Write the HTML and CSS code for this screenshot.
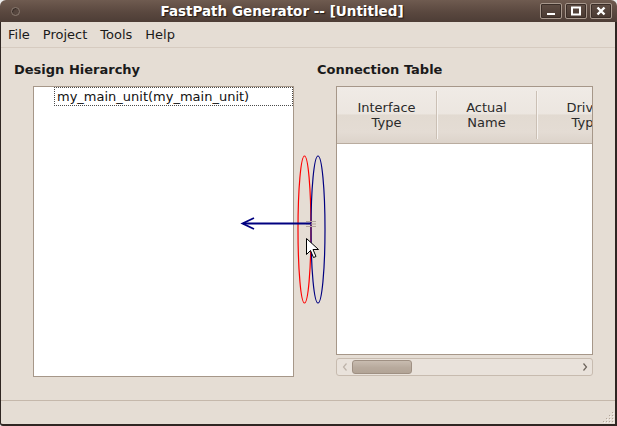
FILE: index.html
```html
<!DOCTYPE html>
<html>
<head>
<meta charset="utf-8">
<title>FastPath Generator</title>
<link rel="stylesheet" href="styles.css">
</head>
<body>
<div class="window">
  <div class="titlebar">
    <span class="wm-icon"></span>
    <span class="title">FastPath Generator -- [Untitled]</span>
    <div class="wm-buttons">
      <span class="wm-btn"><svg width="10" height="10" viewBox="0 0 10 10"><rect x="1" y="7" width="8" height="2" fill="#fff"/></svg></span>
      <span class="wm-btn"><svg width="10" height="10" viewBox="0 0 10 10"><rect x="1" y="1.5" width="8" height="7" fill="none" stroke="#fff" stroke-width="2"/></svg></span>
      <span class="wm-btn"><svg width="10" height="10" viewBox="0 0 10 10"><path d="M1.5 1.5 L8.5 8.5 M8.5 1.5 L1.5 8.5" stroke="#fff" stroke-width="2.4"/></svg></span>
    </div>
  </div>
  <div class="content">
    <div class="menubar">
      <span class="menu-item">File</span>
      <span class="menu-item">Project</span>
      <span class="menu-item">Tools</span>
      <span class="menu-item">Help</span>
    </div>
    <div class="main">
      <section class="pane pane-left">
        <h2 class="pane-title">Design Hierarchy</h2>
        <div class="tree">
          <div class="tree-item">my_main_unit(my_main_unit)</div>
        </div>
      </section>
      <section class="pane pane-right">
        <h2 class="pane-title">Connection Table</h2>
        <div class="table">
          <div class="thead">
            <div class="th">Interface<br>Type</div>
            <span class="th-sep"></span>
            <div class="th">Actual<br>Name</div>
            <span class="th-sep"></span>
            <div class="th">Driver<br>Type</div>
          </div>
          <div class="tbody"></div>
        </div>
        <div class="hscroll">
          <span class="hs-arrow"><svg width="6" height="8" viewBox="0 0 6 8"><path d="M4.5 0.5 L1.5 4 L4.5 7.5" fill="none" stroke="#bdb3a9" stroke-width="1.2"/></svg></span>
          <span class="hs-thumb"></span>
          <span class="hs-track"></span>
          <span class="hs-arrow"><svg width="6" height="8" viewBox="0 0 6 8"><path d="M1.5 0.5 L4.5 4 L1.5 7.5" fill="none" stroke="#6b625a" stroke-width="1.2"/></svg></span>
        </div>
      </section>
      <svg class="drag-overlay" width="110" height="170" viewBox="0 0 110 170">
        <ellipse cx="74.5" cy="79.5" rx="6.5" ry="73.5" fill="none" stroke="#ff0000" stroke-width="1.2"/>
        <ellipse cx="88" cy="79.5" rx="7" ry="73.5" fill="none" stroke="#000080" stroke-width="1.2"/>
        <path d="M76 71.5 H86 M76 74 H86 M76 76.5 H86" stroke="#b3a79c" stroke-width="1"/>
        <line x1="81" y1="73.5" x2="13" y2="73.5" stroke="#000080" stroke-width="2"/>
        <polyline points="24,68 12.5,73.5 24,79" fill="none" stroke="#000080" stroke-width="1.8"/>
        <path d="M76.5 88.5 L76.5 104.5 L80.5 100.5 L83.5 107.5 L86 106.5 L83 99.5 L88.5 99.5 Z" fill="#fff" stroke="#000" stroke-width="1" stroke-linejoin="round"/>
      </svg>
    </div>
    <div class="statusbar">
      <svg class="grip" width="11" height="11" viewBox="0 0 11 11">
        <g fill="#b4a79a">
          <rect x="9" y="0" width="1" height="1"/>
          <rect x="6" y="3" width="1" height="1"/><rect x="9" y="3" width="1" height="1"/>
          <rect x="3" y="6" width="1" height="1"/><rect x="6" y="6" width="1" height="1"/><rect x="9" y="6" width="1" height="1"/>
          <rect x="0" y="9" width="1" height="1"/><rect x="3" y="9" width="1" height="1"/><rect x="6" y="9" width="1" height="1"/><rect x="9" y="9" width="1" height="1"/>
        </g>
        <g fill="#f6f2ee">
          <rect x="10" y="1" width="1" height="1"/>
          <rect x="7" y="4" width="1" height="1"/><rect x="10" y="4" width="1" height="1"/>
          <rect x="4" y="7" width="1" height="1"/><rect x="7" y="7" width="1" height="1"/><rect x="10" y="7" width="1" height="1"/>
          <rect x="1" y="10" width="1" height="1"/><rect x="4" y="10" width="1" height="1"/><rect x="7" y="10" width="1" height="1"/><rect x="10" y="10" width="1" height="1"/>
        </g>
      </svg>
    </div>
  </div>
</div>
</body>
</html>
```
FILE: styles.css
```css
* {
  box-sizing: border-box;
  margin: 0;
  padding: 0;
}

html, body {
  width: 617px;
  height: 426px;
  overflow: hidden;
  background: #ededed;
}

body {
  font-family: "DejaVu Sans", sans-serif;
  font-size: 13px;
  color: #1c1c1c;
}

.window {
  width: 617px;
  height: 426px;
  display: flex;
  flex-direction: column;
}

/* ---------- title bar ---------- */
.titlebar {
  height: 22px;
  flex: none;
  display: flex;
  align-items: center;
  padding: 0 5px 0 11px;
  border-radius: 6px 6px 0 0;
  background: linear-gradient(#6f5b50, #5a483f 55%, #4d3d36);
  color: #fff;
}

.wm-icon {
  width: 9px;
  height: 9px;
  flex: none;
  border-radius: 50%;
  border: 1px solid #8a7a70;
  background: #56463e;
  box-shadow: inset 1px 1px 1px #352a25;
}

.title {
  flex: 1;
  margin-left: 7px;
  text-align: center;
  font-weight: bold;
  font-size: 13.5px;
  line-height: 22px;
  white-space: nowrap;
  text-shadow: 1px 1px 1px #221a16;
}

.wm-buttons {
  display: flex;
  gap: 3px;
  margin-left: 3px;
}

.wm-btn {
  width: 22px;
  height: 16px;
  display: flex;
  align-items: center;
  justify-content: center;
  border: 1px solid #a7978c;
  border-radius: 2px;
  background: linear-gradient(#5f4d44, #493931);
  box-shadow: inset 0 0 0 1px #3a2d27;
}

/* ---------- content ---------- */
.content {
  flex: 1;
  display: flex;
  flex-direction: column;
  background: #e5ddd4;
  border-left: 1px solid #2f2622;
  border-right: 2px solid #2f2622;
  border-bottom: 2px solid #2f2622;
  border-radius: 0 0 0 3px;
}

.menubar {
  height: 26px;
  flex: none;
  display: flex;
  padding-left: 1px;
  border-bottom: 1px solid #d6cbc0;
}

.menu-item {
  padding: 0 6px;
  margin-right: 1px;
  line-height: 26px;
  color: #1a1a1a;
}

.main {
  flex: 1;
  position: relative;
  display: flex;
  gap: 23px;
  padding: 14px 0 0 13px;
}

.pane {
  display: flex;
  flex-direction: column;
}

.pane-left {
  width: 280px;
}

.pane-right {
  width: 276px;
}

.pane-title {
  font-size: 13px;
  font-weight: bold;
  line-height: 16px;
  color: #1a1a1a;
  margin-bottom: 8px;
  white-space: nowrap;
}

.tree {
  margin-left: 19px;
  width: 261px;
  height: 291px;
  background: #fff;
  border: 1px solid #a69789;
}

.tree-item {
  margin-left: 20px;
  height: 19px;
  line-height: 17px;
  padding-left: 2px;
  border: 1px dotted #4a4a4a;
  color: #111;
  white-space: nowrap;
}

.table {
  margin-left: 19px;
  width: 257px;
  height: 269px;
  border: 1px solid #a69789;
  display: flex;
  flex-direction: column;
  overflow: hidden;
  background: #fff;
}

.thead {
  height: 57px;
  flex: none;
  display: flex;
  align-items: center;
  border-bottom: 1px solid #b9ac9f;
  background: linear-gradient(#f0ebe6 0%, #ece6e0 48%, #e2dad1 50%, #e4dcd4 80%, #dcd3ca 100%);
}

.th {
  width: 99px;
  flex: none;
  text-align: center;
  line-height: 15px;
  color: #2a2a2a;
  white-space: nowrap;
}

.th-sep {
  width: 2px;
  height: 48px;
  flex: none;
  border-left: 1px solid #cbc0b5;
  border-right: 1px solid #f6f2ee;
  margin-right: -1px;
}

.tbody {
  flex: 1;
  background: #fff;
}

.hscroll {
  margin-top: 3px;
  margin-left: 19px;
  width: 257px;
  height: 18px;
  display: flex;
  align-items: center;
  border: 1px solid #c7bbaf;
  border-radius: 3px;
  background: #e9e2db;
}

.hs-arrow {
  width: 15px;
  height: 16px;
  flex: none;
  display: flex;
  align-items: center;
  justify-content: center;
}

.hs-thumb {
  width: 60px;
  height: 14px;
  flex: none;
  border: 1px solid #9f9083;
  border-radius: 3px;
  background: linear-gradient(#c8bcb0, #b8aa9d 55%, #b2a496);
}

.hs-track {
  flex: 1;
}

.drag-overlay {
  position: absolute;
  left: 229px;
  top: 102px;
}

.statusbar {
  height: 24px;
  flex: none;
  display: flex;
  justify-content: flex-end;
  align-items: flex-end;
  border-top: 1px solid #c5b8ab;
  padding: 0 1px 1px 0;
}

.grip {
  display: block;
}
```
